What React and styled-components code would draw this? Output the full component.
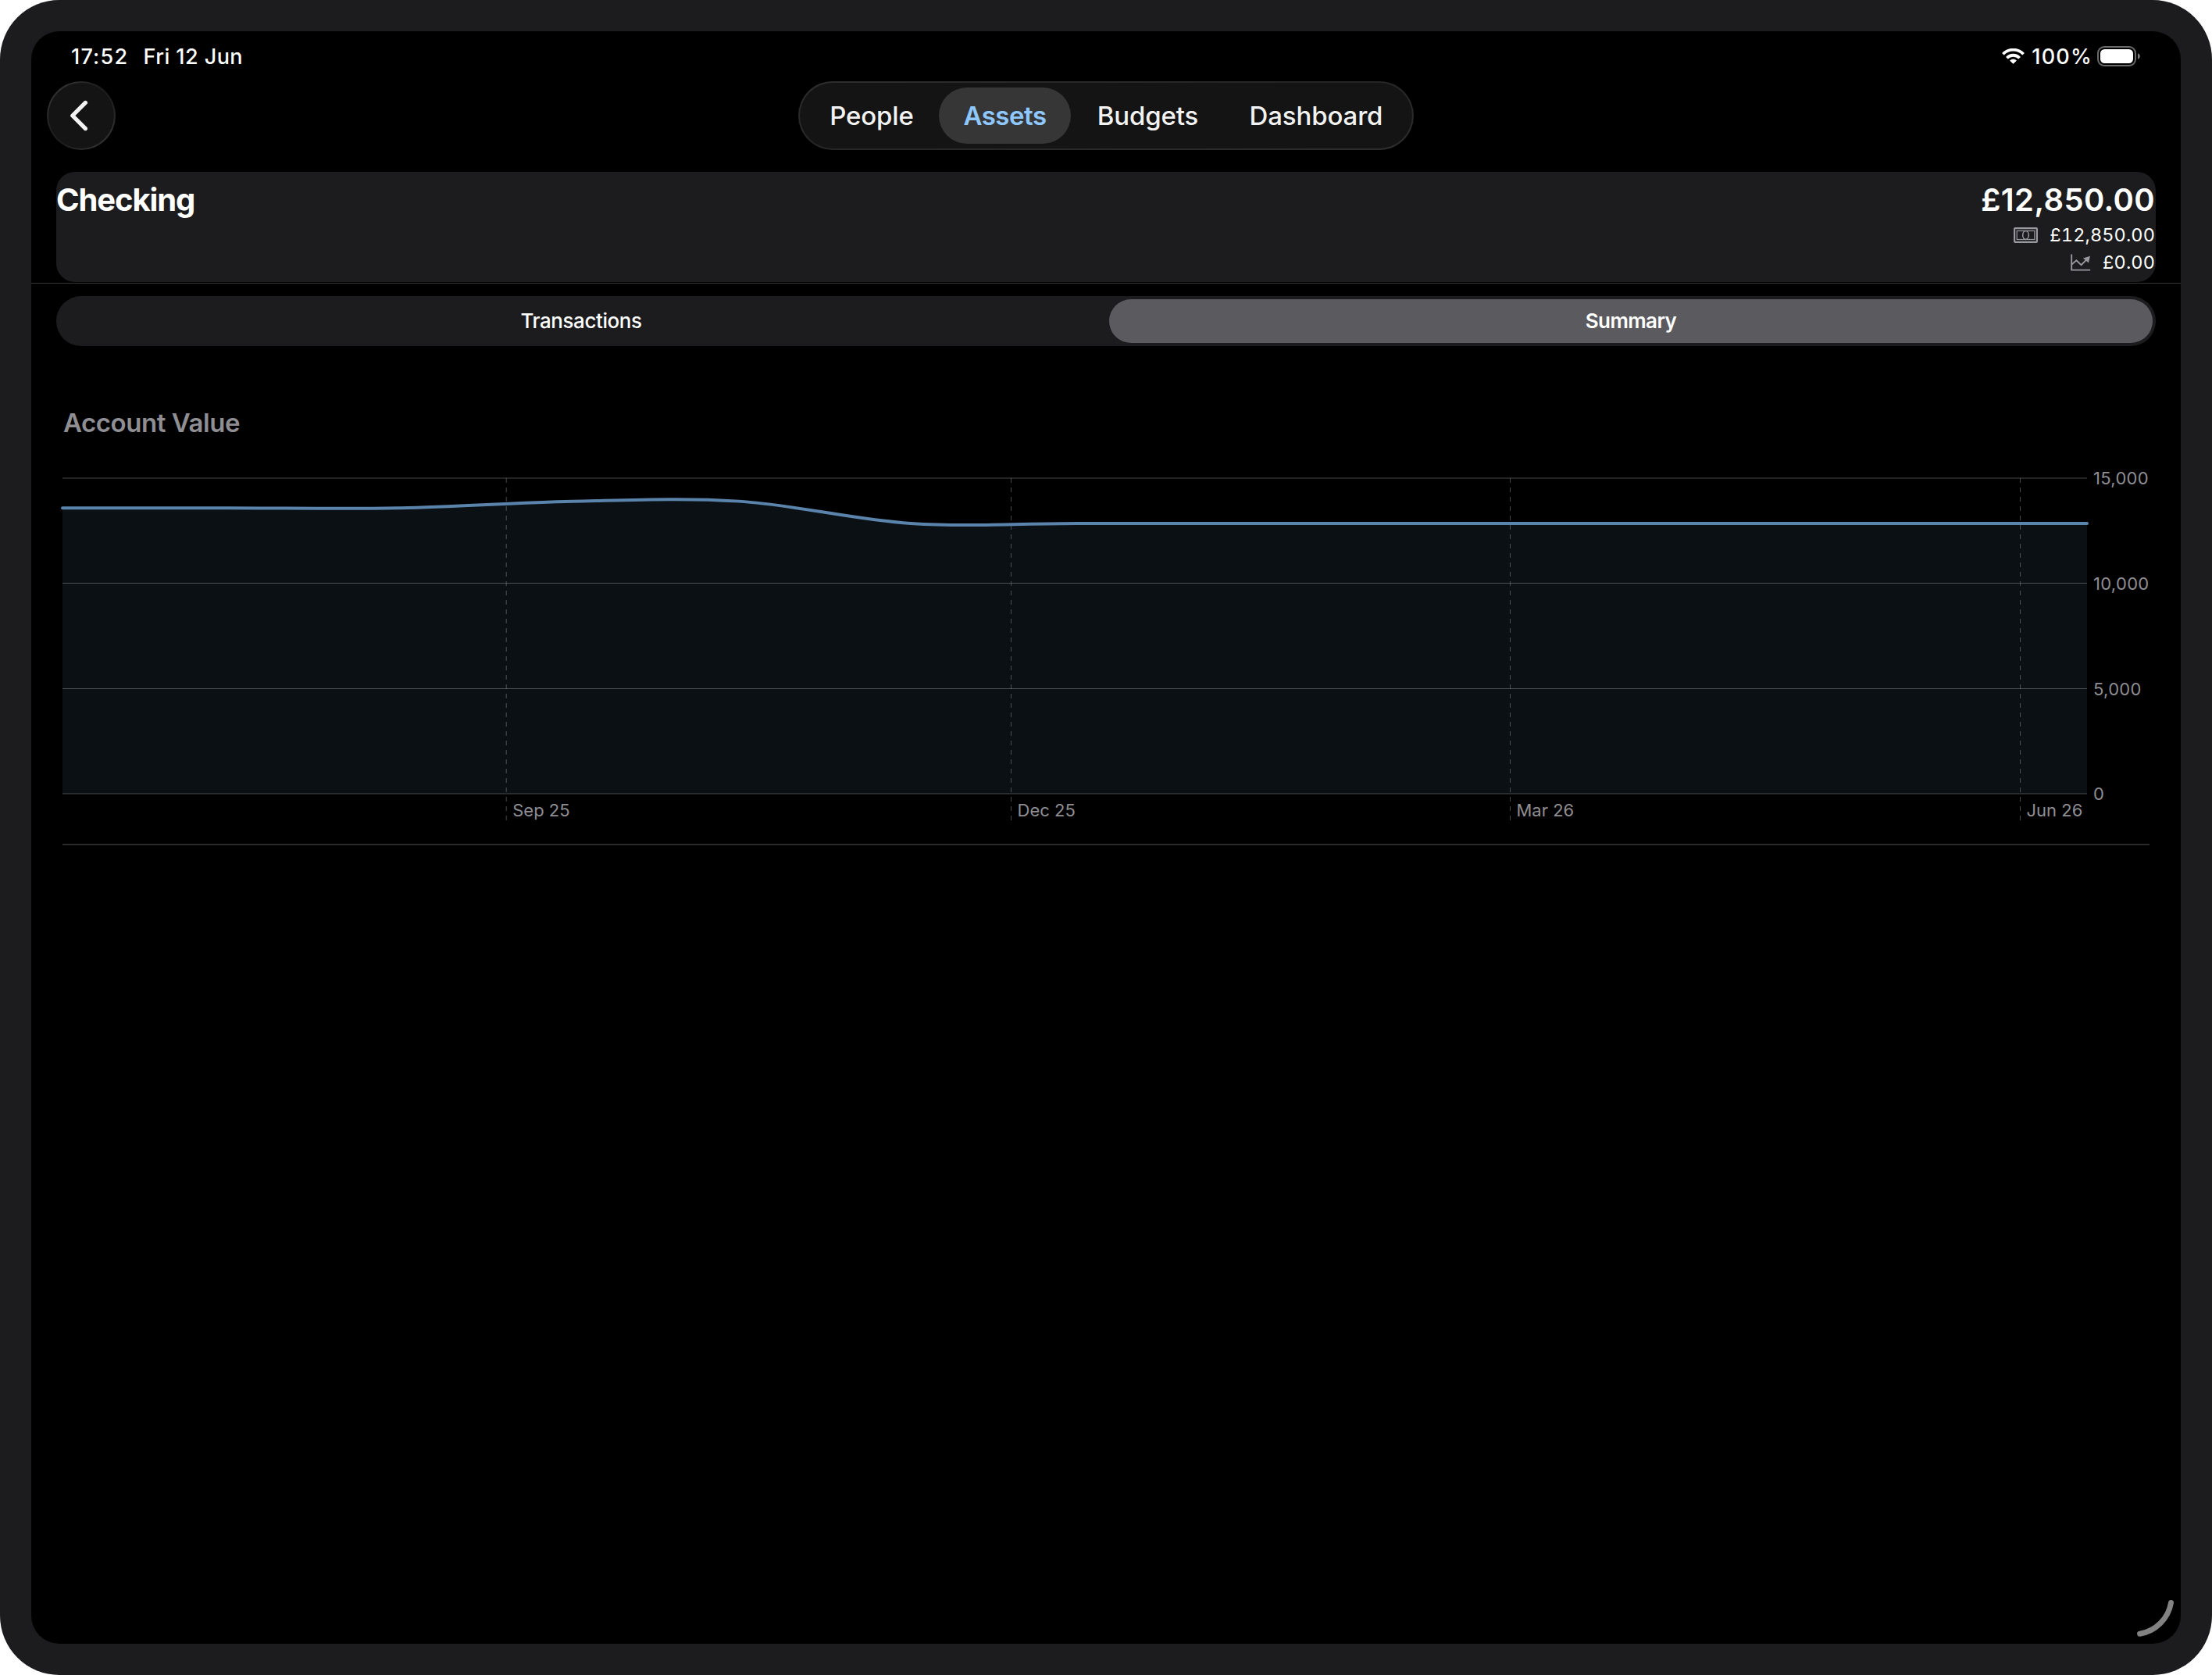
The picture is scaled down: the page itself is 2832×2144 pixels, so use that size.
import { useState } from "react";
import styled, { createGlobalStyle } from "styled-components";

const GlobalStyle = createGlobalStyle`
  * {
    box-sizing: border-box;
  }
  body {
    margin: 0;
    background: #fff;
    color: #fff;
    font-family: Inter, "Liberation Sans", sans-serif;
  }
  button {
    font: inherit;
    color: inherit;
    border: none;
    padding: 0;
    cursor: pointer;
  }
  svg {
    display: block;
    flex: none;
  }
`;

const Bezel = styled.div`
  width: 2832px;
  height: 2144px;
  padding: 40px;
  border-radius: 76px;
  background: #1c1c1e;
`;

const Screen = styled.div`
  position: relative;
  display: flex;
  flex-direction: column;
  height: 100%;
  border-radius: 36px;
  background: #000;
  overflow: hidden;
`;

const StatusBar = styled.header`
  display: flex;
  justify-content: space-between;
  align-items: center;
  height: 64px;
  padding: 0 52px 0 51px;
  font-size: 27px;
  font-weight: 500;
`;

const StatusGroup = styled.div`
  display: flex;
  align-items: center;
`;

const Clock = styled.span`
  width: 92.5px;
  letter-spacing: 1.2px;
`;

const StatusDate = styled.span`
  letter-spacing: 0.45px;
`;

const BatteryLevel = styled.span`
  margin: 0 6px 0 9px;
  letter-spacing: 1.2px;
`;

const NavBar = styled.div`
  display: grid;
  grid-template-columns: 1fr auto 1fr;
  padding: 0 20px;
`;

const BackButton = styled.button`
  display: grid;
  place-content: center;
  width: 88px;
  height: 88px;
  border: 2px solid transparent;
  border-radius: 50%;
  background:
    linear-gradient(#141414, #141414) padding-box,
    linear-gradient(135deg, #3c3c3c, #1e1e1e 40%, #1e1e1e 60%, #3c3c3c)
      border-box;
`;

const NavTabs = styled.nav`
  display: flex;
  height: 88px;
  padding: 6px;
  border: 2px solid transparent;
  border-radius: 44px;
  background:
    linear-gradient(#141414, #141414) padding-box,
    linear-gradient(172deg, #2e2e2e, #262626 45%, #262626 55%, #2e2e2e)
      border-box;
`;

const NavTab = styled.button`
  width: ${(props) => props.$width}px;
  height: 72px;
  border-radius: 36px;
  background: ${(props) => (props.$active ? "#363636" : "transparent")};
  color: ${(props) => (props.$active ? "#8fc7ff" : "#f2f2f2")};
  font-size: 33px;
  font-weight: ${(props) => (props.$active ? 600 : 500)};
  letter-spacing: ${(props) => (props.$active ? "-0.5px" : "-0.15px")};
`;

const AccountCard = styled.section`
  display: flex;
  justify-content: space-between;
  height: 141px;
  margin: 28px 32px 0;
  padding: 11px 1px 0 0;
  border-radius: 24px;
  background: #1c1c1e;
`;

const AccountName = styled.h1`
  margin: 0;
  font-size: 40px;
  font-weight: 700;
  line-height: 49px;
  letter-spacing: -1.1px;
`;

const Balances = styled.div`
  display: flex;
  flex-direction: column;
  align-items: flex-end;
`;

const Total = styled.div`
  margin-bottom: 3px;
  font-size: 40px;
  font-weight: 600;
  line-height: 49px;
  letter-spacing: 0.35px;
`;

const BalanceRow = styled.div`
  display: flex;
  align-items: center;
  gap: 15px;
  height: 35px;
  font-size: 23.5px;
  font-variant-numeric: tabular-nums;
  letter-spacing: 0.1px;
`;

const HeaderRule = styled.div`
  flex: none;
  height: 1px;
  margin-top: 1px;
  background: #343437;
`;

const Segmented = styled.div`
  display: grid;
  grid-template-columns: 1fr 1fr;
  gap: 8px;
  height: 64px;
  margin: 16px 32px 0;
  padding: 4px;
  border-radius: 32px;
  background: #1c1c1e;
`;

const Segment = styled.button`
  padding-bottom: 1px;
  border-radius: 28px;
  background: ${(props) => (props.$active ? "#5b5a5f" : "transparent")};
  font-size: 26px;
  font-weight: ${(props) => (props.$active ? 600 : 500)};
  letter-spacing: ${(props) => (props.$active ? "-0.6px" : "-0.45px")};
`;

const ChartTitle = styled.h2`
  margin: 78px 41px 39px;
  color: #8e8e93;
  font-size: 33px;
  font-weight: 600;
  line-height: 40px;
  letter-spacing: -0.45px;
`;

const Chart = styled.svg`
  margin-left: 32px;
  text {
    fill: #8e8e93;
    font-size: 22px;
  }
`;

const SectionRule = styled.div`
  height: 2px;
  margin: 20px 40px 0;
  background: #2a2a2c;
`;

const ResizeHandle = styled.svg`
  position: absolute;
  right: 5px;
  bottom: 5px;
`;

const tabs = [
  { name: "People", width: 172 },
  { name: "Assets", width: 169 },
  { name: "Budgets", width: 197 },
  { name: "Dashboard", width: 234 },
];

const plot = { left: 80, right: 2672, top: 612, bottom: 1016, max: 15000 };

const yTicks = [
  { value: 15000, y: 612 },
  { value: 10000, y: 746.5 },
  { value: 5000, y: 881.5 },
  { value: 0, y: 1016 },
];

const xTicks = [
  { label: "Sep 25", x: 648.2 },
  { label: "Dec 25", x: 1294.5 },
  { label: "Mar 26", x: 1933.5 },
  { label: "Jun 26", x: 2586.5 },
];

const history = [
  [80, 13580],
  [293, 13580],
  [513, 13580],
  [733, 13900],
  [946, 13900],
  [1166, 12850],
  [1379, 12850],
  [1599, 12850],
  [1819, 12850],
  [2672, 12850],
];

const toY = (value) =>
  plot.bottom - (value / plot.max) * (plot.bottom - plot.top);

// Catmull-Rom spline through the points, written as cubic beziers
function splinePath(points) {
  let d = `M${points[0][0]} ${points[0][1]}`;
  for (let i = 0; i < points.length - 1; i++) {
    const p0 = points[i - 1] || points[i];
    const p1 = points[i];
    const p2 = points[i + 1];
    const p3 = points[i + 2] || p2;
    const dx = (p2[0] - p1[0]) / 3;
    const c1 = [p1[0] + dx, p1[1] + (p2[1] - p0[1]) / 6];
    const c2 = [p2[0] - dx, p2[1] - (p3[1] - p1[1]) / 6];
    d += ` C${c1[0]} ${c1[1]} ${c2[0]} ${c2[1]} ${p2[0]} ${p2[1]}`;
  }
  return d;
}

const WifiIcon = () => (
  <svg width="29" height="20" viewBox="0 0 29 20">
    <g fill="none" stroke="#fff" strokeWidth="3.8">
      <path d="M1.4 7.3A18.1 18.1 0 0 1 27.6 7.3" />
      <path d="M6.4 12.2A11.2 11.2 0 0 1 22.6 12.2" />
    </g>
    <path
      d="M14.5 19.2L10.6 15.6A5.7 5.7 0 0 1 18.4 15.6Z"
      fill="#fff"
      stroke="#fff"
      strokeWidth="1"
      strokeLinejoin="round"
    />
  </svg>
);

const BatteryIcon = () => (
  <svg width="55" height="26" viewBox="0 0 55 26">
    <rect
      x="1"
      y="1"
      width="48"
      height="24"
      rx="8"
      fill="none"
      stroke="#6a6a6a"
      strokeWidth="2"
    />
    <rect x="4" y="4" width="42" height="18" rx="5.5" fill="#fff" />
    <path d="M52 9.3C54 10 54.8 11.5 54.8 13S54 16 52 16.7Z" fill="#7a7a7a" />
  </svg>
);

const ChevronIcon = () => (
  <svg width="28" height="44" viewBox="0 0 28 44">
    <path
      d="M19.4 5.4L2.8 22L19.4 38.6"
      fill="none"
      stroke="#f2f2f2"
      strokeWidth="5.2"
      strokeLinecap="round"
      strokeLinejoin="round"
    />
  </svg>
);

const BanknoteIcon = () => (
  <svg width="31" height="20" viewBox="0 0 31 20">
    <g fill="none" stroke="#98989f">
      <rect x="1.1" y="1.1" width="28.8" height="17.8" rx="0.8" strokeWidth="2.2" />
      <rect x="4.2" y="4.5" width="22.6" height="11" strokeWidth="1.2" />
      <ellipse cx="15.5" cy="10" rx="3.8" ry="5.4" strokeWidth="1.5" />
    </g>
  </svg>
);

const TrendIcon = () => (
  <svg width="26" height="22" viewBox="0 0 26 22">
    <g fill="none" stroke="#98989f" strokeWidth="1.9">
      <path d="M1.2 0.5V20.6H25.2" />
      <path d="M1.6 13.4L7.4 8.2L13.6 14.2L21.5 6.2" />
    </g>
    <path d="M16 5.4L25 2.8L22.9 11.6Z" fill="#98989f" />
  </svg>
);

function ValueChart() {
  const line = splinePath(history.map(([x, value]) => [x, toY(value)]));

  return (
    <Chart width="2688" height="460" viewBox="72 600 2688 460">
      <path
        d={`${line} V${plot.bottom} H${plot.left} Z`}
        fill="#0b1014"
      />
      <g stroke="rgb(142 142 147 / 0.5)" strokeWidth="1">
        {yTicks.map(({ value, y }) => (
          <line key={value} x1={plot.left} x2={plot.right} y1={y} y2={y} />
        ))}
        {xTicks.map(({ label, x }) => (
          <line
            key={label}
            x1={x}
            x2={x}
            y1={plot.top}
            y2="1050"
            strokeDasharray="6 6"
          />
        ))}
      </g>
      <path
        d={line}
        fill="none"
        stroke="#5b84ac"
        strokeWidth="4"
        strokeLinecap="round"
      />
      {yTicks.map(({ value, y }) => (
        <text key={value} x="2680" y={y + 8} letterSpacing="0.3">
          {value.toLocaleString("en-GB")}
        </text>
      ))}
      {xTicks.map(({ label, x }) => (
        <text key={label} x={x + 8} y="1045">
          {label}
        </text>
      ))}
    </Chart>
  );
}

function App() {
  const [tab, setTab] = useState("Assets");
  const [segment, setSegment] = useState("Summary");

  return (
    <Bezel>
      <GlobalStyle />
      <Screen>
        <StatusBar>
          <StatusGroup>
            <Clock>17:52</Clock>
            <StatusDate>Fri 12 Jun</StatusDate>
          </StatusGroup>
          <StatusGroup>
            <WifiIcon />
            <BatteryLevel>100%</BatteryLevel>
            <BatteryIcon />
          </StatusGroup>
        </StatusBar>

        <NavBar>
          <BackButton type="button" aria-label="Back">
            <ChevronIcon />
          </BackButton>
          <NavTabs>
            {tabs.map(({ name, width }) => (
              <NavTab
                key={name}
                type="button"
                $width={width}
                $active={name === tab}
                onClick={() => setTab(name)}
              >
                {name}
              </NavTab>
            ))}
          </NavTabs>
        </NavBar>

        <AccountCard>
          <AccountName>Checking</AccountName>
          <Balances>
            <Total>£12,850.00</Total>
            <BalanceRow>
              <BanknoteIcon />
              £12,850.00
            </BalanceRow>
            <BalanceRow>
              <TrendIcon />
              £0.00
            </BalanceRow>
          </Balances>
        </AccountCard>
        <HeaderRule />

        <Segmented>
          {["Transactions", "Summary"].map((name) => (
            <Segment
              key={name}
              type="button"
              $active={name === segment}
              onClick={() => setSegment(name)}
            >
              {name}
            </Segment>
          ))}
        </Segmented>

        <ChartTitle>Account Value</ChartTitle>
        <ValueChart />
        <SectionRule />

        <ResizeHandle width="56" height="56" viewBox="2731 2043 56 56">
          <path
            d="M2779.5 2051.5A48.5 48.5 0 0 1 2739.6 2091.3"
            fill="none"
            stroke="#828282"
            strokeWidth="7"
            strokeLinecap="round"
          />
        </ResizeHandle>
      </Screen>
    </Bezel>
  );
}

export default App;
